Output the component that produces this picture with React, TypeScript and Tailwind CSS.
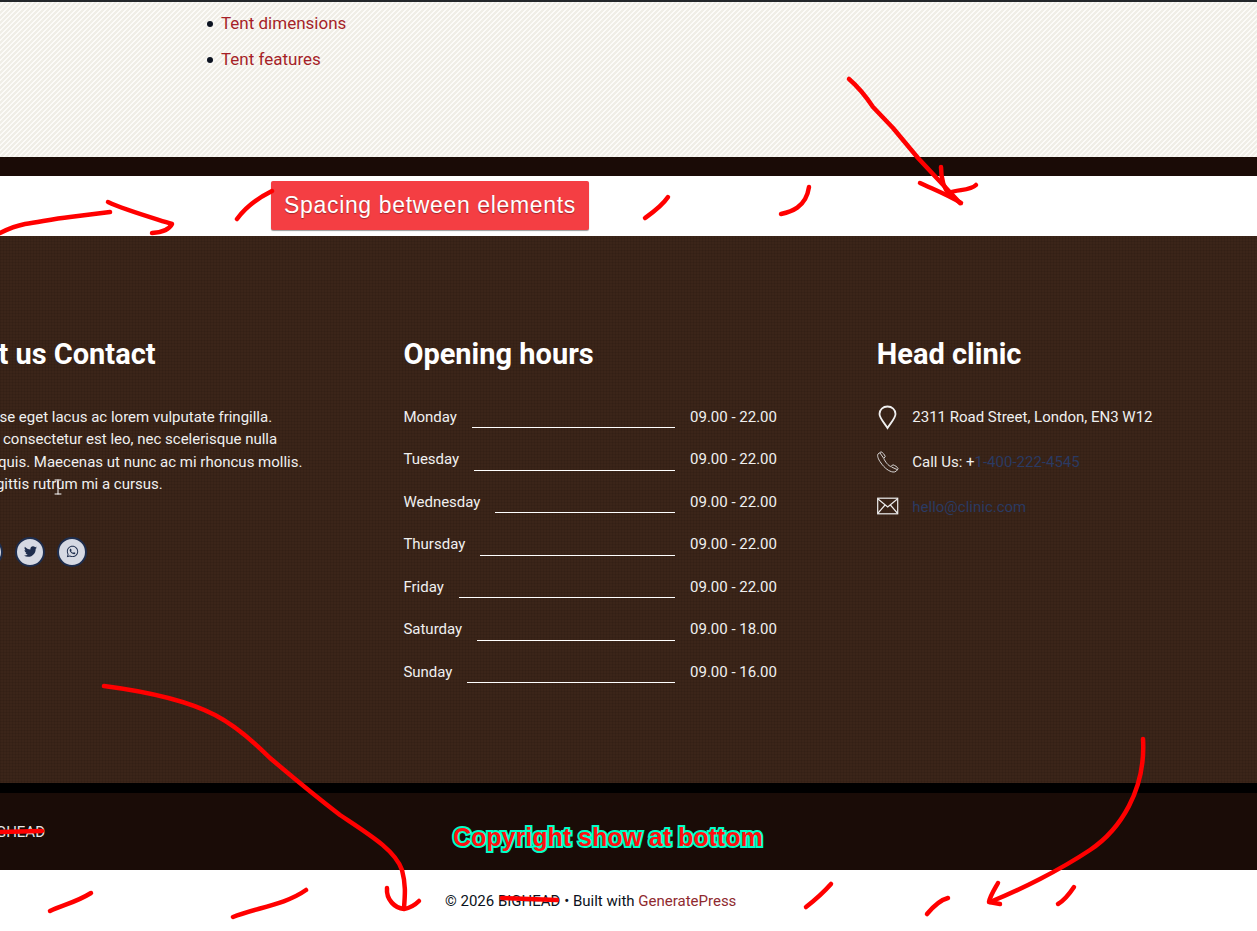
import { FaFacebookF, FaInstagram, FaTwitter, FaWhatsapp } from "react-icons/fa";

const hours = [
  ["Monday", "09.00 - 22.00"],
  ["Tuesday", "09.00 - 22.00"],
  ["Wednesday", "09.00 - 22.00"],
  ["Thursday", "09.00 - 22.00"],
  ["Friday", "09.00 - 22.00"],
  ["Saturday", "09.00 - 18.00"],
  ["Sunday", "09.00 - 16.00"],
];

const socials = [FaFacebookF, FaInstagram, FaTwitter, FaWhatsapp];

const scribbles = [
  "M0,233 C8,229 15,226 25,224 C40,222 52,219 70,217 L110,212",
  "M108,202 C125,210 150,217 172,224 Q168,232 152,233",
  "M237,219 C245,208 258,198 272,191",
  "M645,218 C652,213 662,206 668,197",
  "M781,214 C790,212 806,208 809,187",
  "M849,79 C856,85 865,95 873,107 L893,128 L918,158 L960,203",
  "M920,183 C935,190 948,195 961,203",
  "M941,167 C941,178 943,188 950,195",
  "M948,193 C958,189 970,191 976,185",
  "M104,686 C150,692 190,702 215,715 C240,728 260,748 270,758 C290,775 310,792 340,815 C370,835 395,850 402,870 C406,885 405,895 404,908",
  "M387,888 C386,900 395,908 404,909 C410,908 415,905 419,901",
  "M1143,739 C1146,790 1120,830 1090,850 C1060,870 1020,890 990,902",
  "M998,883 C994,890 990,896 989,902 L1000,904",
  "M50,911 C62,905 75,903 91,893",
  "M233,917 C255,908 285,905 306,890",
  "M806,907 C815,900 823,893 831,884",
  "M927,914 C932,908 940,900 948,898",
  "M1058,904 C1065,900 1070,893 1074,887",
  "M0,832 L42,831",
  "M502,898 L557,900",
];

export default function App() {
  return (
    <div className="relative w-[1257px] h-[931px] overflow-hidden bg-white font-['Roboto',sans-serif] text-[15px] leading-[22.5px]">
      <div className="h-[2px] bg-[#23272a]" />

      <div className="h-[155px] pl-[221px] pt-[9px] bg-[#f9f8f4] bg-[linear-gradient(135deg,#f0eee7_25%,#fcfbf8_25%,#fcfbf8_50%,#f0eee7_50%,#f0eee7_75%,#fcfbf8_75%)] bg-[size:5px_5px]">
        <ul className="text-[17px] leading-[25px] text-[#a61f28]">
          <li className="relative mb-[11px] before:content-[''] before:absolute before:-left-[14px] before:top-[10px] before:w-[6px] before:h-[6px] before:rounded-full before:bg-[#0b1220]">Tent dimensions</li>
          <li className="relative before:content-[''] before:absolute before:-left-[14px] before:top-[10px] before:w-[6px] before:h-[6px] before:rounded-full before:bg-[#0b1220]">Tent features</li>
        </ul>
      </div>

      <div className="h-[19px] bg-[#1a0b06]" />

      <div className="h-[60px] pl-[271px] pt-[5px]">
        <div className="w-[318px] h-[49px] flex items-center justify-center rounded-[2px] bg-[#f43e43] shadow-[0_1px_1px_rgba(0,0,0,0.4)] font-['Liberation_Sans',sans-serif] text-[23px] tracking-[0.65px] text-white [text-shadow:0_1px_1px_rgba(0,0,0,0.35)]">
          Spacing between elements
        </div>
      </div>

      <div className="h-[547px] pt-[100px] text-[#f0f0f0] bg-[#3b2519] bg-[linear-gradient(90deg,rgba(0,0,0,0.07)_1px,transparent_1px),linear-gradient(0deg,rgba(0,0,0,0.07)_1px,transparent_1px)] bg-[size:3px_3px]">
        <div className="-ml-[70px] grid grid-cols-[374px_373.6px_374px] gap-x-[99.4px]">
          <div>
            <h3 className="h-[36px] mb-[33.75px] text-[29px] leading-[36px] font-bold text-white whitespace-nowrap">About us Contact</h3>
            <p className="whitespace-nowrap">
              Suspendisse eget lacus ac lorem vulputate fringilla.<br />
              <span className="inline-block w-[73px]">Aenean</span>consectetur est leo, nec scelerisque nulla<br />
              <span className="inline-block w-[68px]">Curabitur</span>quis. Maecenas ut nunc ac mi rhoncus mollis.<br />
              <span className="inline-block w-[50px]">Donec</span>sagittis rutrum mi a cursus.
            </p>
            <div className="mt-[41px] ml-[1px] flex gap-[12px]">
              {socials.map((Icon, i) => (
                <span key={i} className="w-[30px] h-[30px] flex items-center justify-center rounded-full border-2 border-[#1e2d4d] bg-[#d6d9e3] text-[#1e2d4d]">
                  <Icon className="w-[13px] h-[13px]" />
                </span>
              ))}
            </div>
          </div>

          <div>
            <h3 className="h-[36px] mb-[33.75px] text-[29px] leading-[36px] font-bold text-white whitespace-nowrap">Opening hours</h3>
            {hours.map(([day, time]) => (
              <div key={day} className="h-[42.5px] flex items-start gap-[15px]">
                <span>{day}</span>
                <span className="flex-1 h-[22.5px] border-b border-white" />
                <span>{time}</span>
              </div>
            ))}
          </div>

          <div className="ml-[0.4px]">
            <h3 className="h-[36px] mb-[33.75px] text-[29px] leading-[36px] font-bold text-white whitespace-nowrap">Head clinic</h3>
            <div className="h-[45px] flex items-start">
              <span className="w-[35.5px] h-[22px] relative">
                <svg className="absolute left-0 top-0 overflow-visible" width="22" height="24" viewBox="0 0 22 24" fill="none" stroke="#f0f0f0" strokeWidth="1.8">
                  <path d="M10.5 22 C7 16.5 2.5 12 2.5 8 C2.5 3.5 6 0.5 10.5 0.5 C15 0.5 18.5 3.5 18.5 8 C18.5 12 14 16.5 10.5 22 Z" />
                </svg>
              </span>
              <span>2311 Road Street, London, EN3 W12</span>
            </div>
            <div className="h-[45px] flex items-start">
              <span className="w-[35.5px] h-[22px] relative">
                <svg className="absolute left-0 top-0 overflow-visible" width="22" height="22" viewBox="0 0 22 22" fill="none" stroke="#e8e8e8" strokeWidth="0.9">
                  <path d="M4 0.8 L1 3 C0 4.5 1 8 4 12 C7.5 17 12 20.5 16 21 C18.5 21.3 20.5 19.5 21 17.5 C20.5 16 18 14.5 16 13.8 L13.8 15.5 C11.5 15 8 10.5 6.8 7.5 L8.2 5.5 C7.5 3.5 5.5 1.2 4 0.8 Z" />
                  <path d="M3 2 L6.5 7 M14.5 16 L20 18.5" />
                </svg>
              </span>
              <span>Call Us: +<span className="text-[#2a3a62]">1-400-222-4545</span></span>
            </div>
            <div className="h-[45px] flex items-start">
              <span className="w-[35.5px] h-[22px] relative">
                <svg className="absolute left-0 top-[1px] overflow-visible" width="22" height="18" viewBox="0 0 22 18" fill="none" stroke="#eeeeee" strokeWidth="1.2">
                  <rect x="0.7" y="1.2" width="20" height="15.6" />
                  <path d="M0.7 1.7 L10.7 10 L20.7 1.7 M0.7 16.5 L8 8 M20.7 16.5 L13.4 8" />
                </svg>
              </span>
              <span className="text-[#2a3a62]">hello@clinic.com</span>
            </div>
          </div>
        </div>
      </div>

      <div className="h-[10px] bg-black" />

      <div className="h-[77px] flex bg-[#1a0c07]">
        <div className="w-[45px] flex justify-end pt-[28px] text-[15px] text-[#e8e8e8]">
          <span>BIGHEAD</span>
        </div>
        <div className="ml-[408px] pt-[26px] font-['Liberation_Sans',sans-serif] font-bold text-[25px] leading-[36px] text-[#ff1010] [paint-order:stroke_fill] [-webkit-text-stroke:4px_#00ffc8] whitespace-nowrap">
          Copyright show at bottom
        </div>
      </div>

      <div className="h-[61px] pl-[445px] pt-[20px] text-[15px] text-[#0b1220]">
        © 2026 BIGHEAD • Built with <span className="text-[#8f2a2f]">GeneratePress</span>
      </div>

      <svg className="absolute left-0 top-0 pointer-events-none" width="1257" height="931" viewBox="0 0 1257 931" fill="none" stroke="#ff0000" strokeWidth="4.5" strokeLinecap="round" strokeLinejoin="round">
        {scribbles.map((d) => (
          <path key={d} d={d} />
        ))}
        <path d="M55,480 H61 M58,480 V494 M55,494 H61" stroke="#ffffff" strokeWidth="1" />
      </svg>
    </div>
  );
}
